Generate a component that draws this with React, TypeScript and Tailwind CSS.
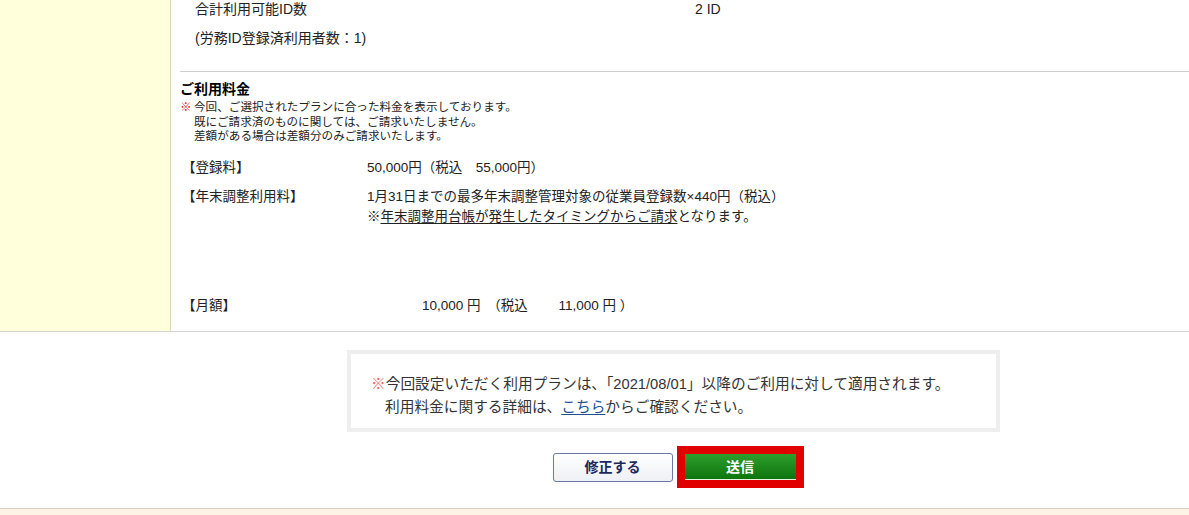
export default function App() {
  return (
    <div className="w-[1189px] h-[515px] overflow-hidden bg-white text-[#222] font-['Liberation_Sans','Noto_Sans_CJK_JP',sans-serif]">
      {/* plan detail table */}
      <div className="flex border-b border-[#d4d4d4] h-[332px]">
        <div className="w-[171px] shrink-0 bg-[#ffffdc] border-r border-[#dcd8b4]" />
        <div className="flex-1">
          <div className="pl-[24px] text-[14px]">
            <div className="flex h-[18px] leading-[18px]">
              <span className="w-[500px]">合計利用可能ID数</span>
              <span>2 ID</span>
            </div>
            <div className="mt-[11px] h-[18px] leading-[18px]">(労務ID登録済利用者数：1)</div>
          </div>
          <div className="mt-[24px] ml-[9px] border-t border-[#cfcfcf]" />

          <div className="pl-[9px]">
            <h2 className="mt-[8px] text-[14px] font-bold leading-[18px] text-black">ご利用料金</h2>
            <div className="mt-[2px] flex text-[11.6px] leading-[14.5px]">
              <span className="w-[14px] text-[#e0202a]">※</span>
              <div>
                <p>今回、ご選択されたプランに合った料金を表示しております。</p>
                <p>既にご請求済のものに関しては、ご請求いたしません。</p>
                <p>差額がある場合は差額分のみご請求いたします。</p>
              </div>
            </div>
          </div>

          <div className="pl-[11px] text-[13.5px] leading-[20px]">
            <div className="mt-[14px] flex">
              <span className="w-[185px]">【登録料】</span>
              <span>50,000円（税込　55,000円）</span>
            </div>
            <div className="mt-[9px] flex">
              <span className="w-[185px]">【年末調整利用料】</span>
              <div>
                <p>1月31日までの最多年末調整管理対象の従業員登録数×440円（税込）</p>
                <p>
                  ※<span className="underline underline-offset-2">年末調整用台帳が発生したタイミングからご請求</span>となります。
                </p>
              </div>
            </div>
            <div className="mt-[69px] flex">
              <span className="w-[240px]">【月額】</span>
              <span className="whitespace-pre">10,000 円　（税込　　 11,000 円 ）</span>
            </div>
          </div>
        </div>
      </div>

      {/* notice and actions */}
      <div className="pl-[158px]">
        <div className="mx-auto mt-[18px] w-[653px] h-[82px] border-4 border-[#eeeeee] pt-[19px] pl-[20px] text-[14.7px] leading-[23px] text-[#333]">
          <p>
            <span className="text-[#e8646a]">※</span>今回設定いただく利用プランは、「2021/08/01」以降のご利用に対して適用されます。
          </p>
          <p className="pl-[14px]">
            利用料金に関する詳細は、<a className="text-[#1d4f91] underline underline-offset-2">こちら</a>からご確認ください。
          </p>
        </div>
      </div>

      <div className="mt-[14px] flex justify-center items-center gap-[4px] pl-[167px]">
        <button className="w-[120px] h-[29px] rounded-[3px] border border-[#6a7aa4] bg-gradient-to-b from-white to-[#eef0f5] text-[14px] font-bold text-[#1c2960]">
          修正する
        </button>
        <div className="bg-[#e10000] px-[8px] py-[8px]">
          <button className="w-[111px] h-[26px] bg-gradient-to-b from-[#2c9e2c] to-[#0d750d] border-b border-[#e8f5e0] text-[14px] font-bold text-white leading-none">
            送信
          </button>
        </div>
      </div>

      <div className="mt-[20px] h-[8px] border-t border-[#d9cfbe] bg-[#fdf4e6]" />
    </div>
  );
}
